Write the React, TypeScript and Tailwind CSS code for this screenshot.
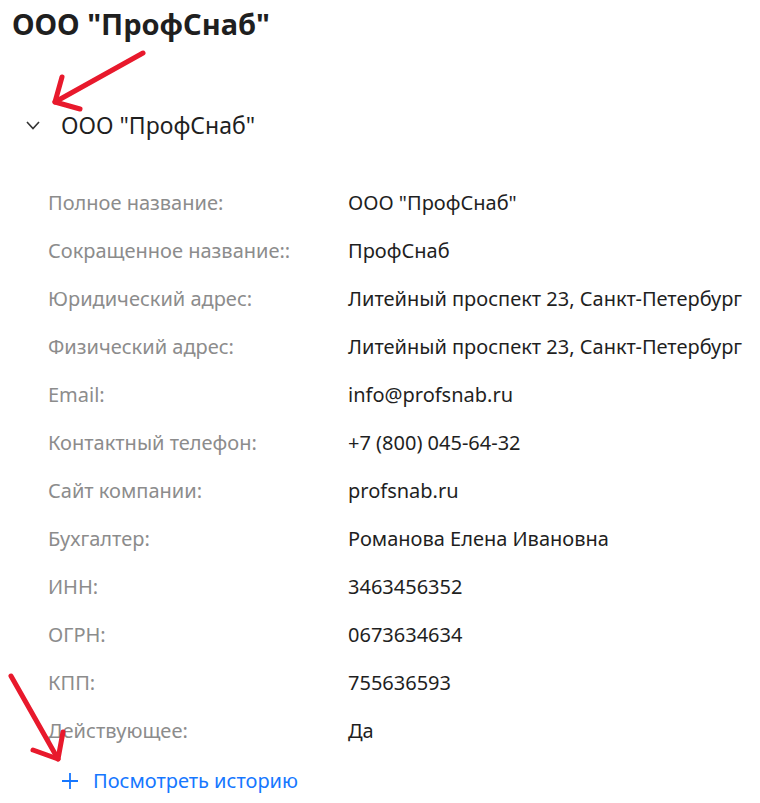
const rows: [string, string][] = [
  ["Полное название:", 'ООО "ПрофСнаб"'],
  ["Сокращенное название::", "ПрофСнаб"],
  ["Юридический адрес:", "Литейный проспект 23, Санкт-Петербург"],
  ["Физический адрес:", "Литейный проспект 23, Санкт-Петербург"],
  ["Email:", "info@profsnab.ru"],
  ["Контактный телефон:", "+7 (800) 045-64-32"],
  ["Сайт компании:", "profsnab.ru"],
  ["Бухгалтер:", "Романова Елена Ивановна"],
  ["ИНН:", "3463456352"],
  ["ОГРН:", "0673634634"],
  ["КПП:", "755636593"],
  ["Действующее:", "Да"],
];

function Arrows() {
  return (
    <svg
      className="pointer-events-none absolute inset-0"
      width={760}
      height={803}
      viewBox="0 0 760 803"
      fill="none"
      stroke="#e8192c"
      strokeWidth={5}
      strokeLinecap="round"
      strokeLinejoin="round"
    >
      <path d="M143 53 L55 102" />
      <path d="M62 77 L55 102 L80 109" />
      <path d="M11 676 L58 759" />
      <path d="M63 732 L58 759 L33 750" />
    </svg>
  );
}

export default function App() {
  return (
    <div
      className="relative h-[803px] w-[760px] overflow-hidden bg-white"
      style={{ fontFamily: '"Noto Sans", "Open Sans", sans-serif' }}
    >
      <h1 className="flex h-[48px] items-center px-3 text-[29px] font-bold text-[#1f1f1f]">
        ООО "ПрофСнаб"
      </h1>

      <div className="mt-[53px] flex h-[48px] items-center pl-[26px] text-[23px] text-[#1f1f1f]">
        <svg width={14} height={9} viewBox="0 0 14 9" fill="none" stroke="#333" strokeWidth={1.6}>
          <path d="M1 1 L7 7.5 L13 1" />
        </svg>
        <span className="ml-[21px]">ООО "ПрофСнаб"</span>
      </div>

      <div className="mt-[30px] grid grid-cols-[300px_1fr] pl-[48px] text-[20px]">
        {rows.map(([label, value], i) => (
          <div key={i} className="contents">
            <div className="flex h-[48px] items-center whitespace-nowrap text-[#8c8c8c]">
              {label}
            </div>
            <div className="flex h-[48px] items-center whitespace-nowrap text-[#1f1f1f]">
              {value}
            </div>
          </div>
        ))}
      </div>

      <div className="flex h-[48px] items-center pl-[62px] pt-[3px] text-[20px] text-[#1677ff]">
        <svg width={16} height={16} viewBox="0 0 16 16" fill="none" stroke="#1677ff" strokeWidth={1.8}>
          <path d="M8 0 V16 M0 8 H16" />
        </svg>
        <span className="ml-[15px]">Посмотреть историю</span>
      </div>

      <Arrows />
    </div>
  );
}
